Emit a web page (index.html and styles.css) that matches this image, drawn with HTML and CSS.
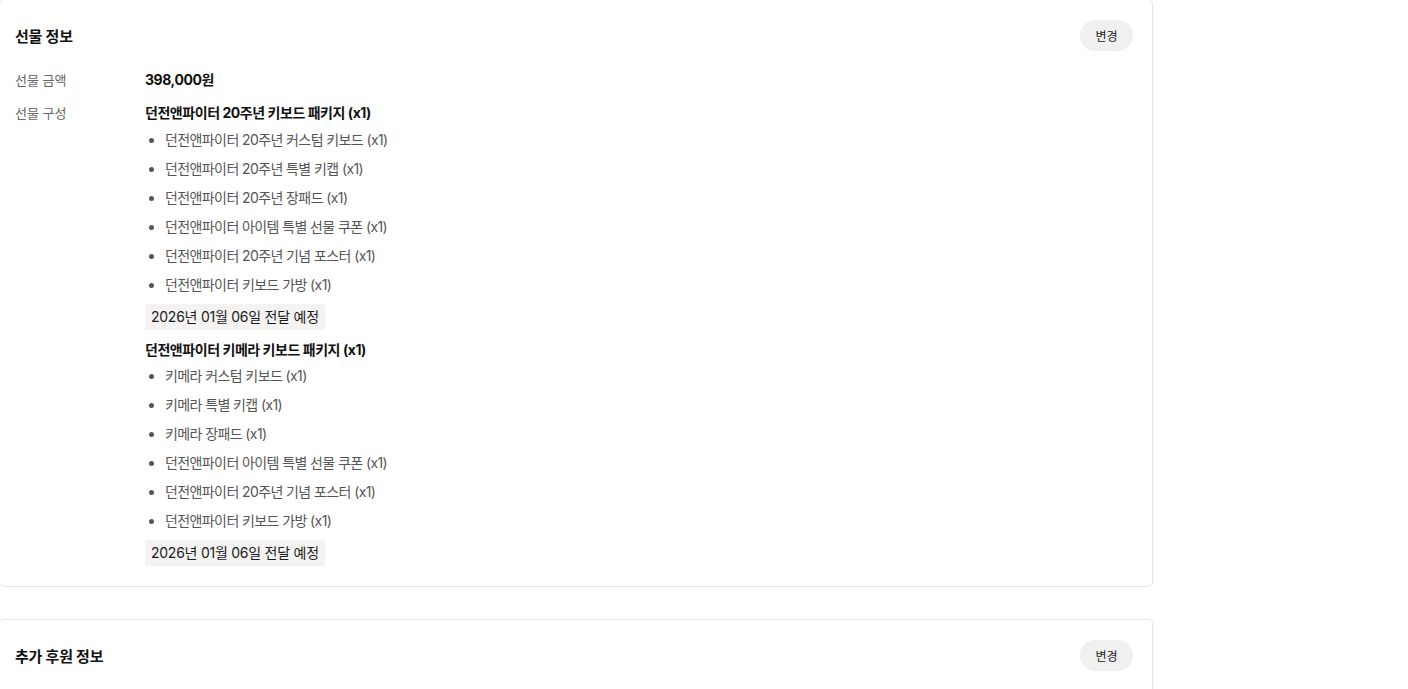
FILE: index.html
```html
<!DOCTYPE html>
<html lang="ko">
<head>
<meta charset="utf-8">
<title>선물 정보</title>
<link rel="stylesheet" href="styles.css">
</head>
<body>
<div class="page">
  <section class="card card-first">
    <div class="card-head">
      <h2 class="card-title">선물 정보</h2>
      <button class="btn-change">변경</button>
    </div>
    <div class="row row-amount">
      <div class="label">선물 금액</div>
      <div class="value strong">398,000원</div>
    </div>
    <div class="row row-items">
      <div class="label">선물 구성</div>
      <div class="value">
        <div class="pkg">
          <div class="pkg-title">던전앤파이터 20주년 키보드 패키지 (x1)</div>
          <ul class="pkg-list">
            <li>던전앤파이터 20주년 커스텀 키보드 (x1)</li>
            <li>던전앤파이터 20주년 특별 키캡 (x1)</li>
            <li>던전앤파이터 20주년 장패드 (x1)</li>
            <li>던전앤파이터 아이템 특별 선물 쿠폰 (x1)</li>
            <li>던전앤파이터 20주년 기념 포스터 (x1)</li>
            <li>던전앤파이터 키보드 가방 (x1)</li>
          </ul>
          <div class="tag">2026년 01월 06일 전달 예정</div>
        </div>
        <div class="pkg pkg-next">
          <div class="pkg-title">던전앤파이터 키메라 키보드 패키지 (x1)</div>
          <ul class="pkg-list">
            <li>키메라 커스텀 키보드 (x1)</li>
            <li>키메라 특별 키캡 (x1)</li>
            <li>키메라 장패드 (x1)</li>
            <li>던전앤파이터 아이템 특별 선물 쿠폰 (x1)</li>
            <li>던전앤파이터 20주년 기념 포스터 (x1)</li>
            <li>던전앤파이터 키보드 가방 (x1)</li>
          </ul>
          <div class="tag">2026년 01월 06일 전달 예정</div>
        </div>
      </div>
    </div>
  </section>
  <section class="card card-second">
    <div class="card-head">
      <h2 class="card-title">추가 후원 정보</h2>
      <button class="btn-change">변경</button>
    </div>
  </section>
</div>
</body>
</html>
```

FILE: styles.css
```css
* { box-sizing: border-box; }
html, body { margin: 0; padding: 0; background: #fff; }
body {
  font-family: Inter, "Noto Sans CJK KR", sans-serif;
  color: #1a1a1a;
  overflow: hidden;
}
.page {
  display: flex;
  flex-direction: column;
  gap: 32px;
  margin-top: -1px;
  margin-left: -1px;
  width: 1154px;
}
.card {
  border: 1px solid #e4e4e4;
  border-radius: 5px;
  padding: 20px 19px 20px 15px;
  background: #fff;
}
.card-second { height: 120px; }
.card-head {
  display: flex;
  align-items: center;
  justify-content: space-between;
  height: 31px;
}
.card-title {
  margin: 0;
  font-size: 15px;
  font-weight: 700;
  color: #111;
  letter-spacing: -0.2px;
}
.btn-change {
  width: 53px;
  height: 31px;
  border: 0;
  border-radius: 16px;
  background: #f0f0f0;
  font-family: inherit;
  font-size: 12px;
  color: #222;
  padding: 0;
}
.row {
  display: flex;
  line-height: 20px;
  font-size: 14px;
}
.row-amount { margin-top: 19px; }
.row-items { margin-top: 13px; }
.label {
  width: 130px;
  flex: none;
  font-size: 13px;
  color: #666;
}
.value { color: #111; }
.strong, .pkg-title { font-weight: 700; letter-spacing: -0.45px; }
.pkg-list {
  margin: 7px 0 0;
  padding: 0 0 0 20px;
  color: #555;
  letter-spacing: -0.6px;
}
.pkg-list li + li { margin-top: 9px; }
.tag {
  display: inline-block;
  margin-top: 9px;
  height: 26px;
  line-height: 26px;
  padding: 0 6px;
  background: #f4f3f2;
  border-radius: 2px;
  color: #1a1a1a;
  letter-spacing: -0.25px;
}
.pkg-next { margin-top: 10px; }
.pkg-next .pkg-list { margin-top: 6px; }
```
